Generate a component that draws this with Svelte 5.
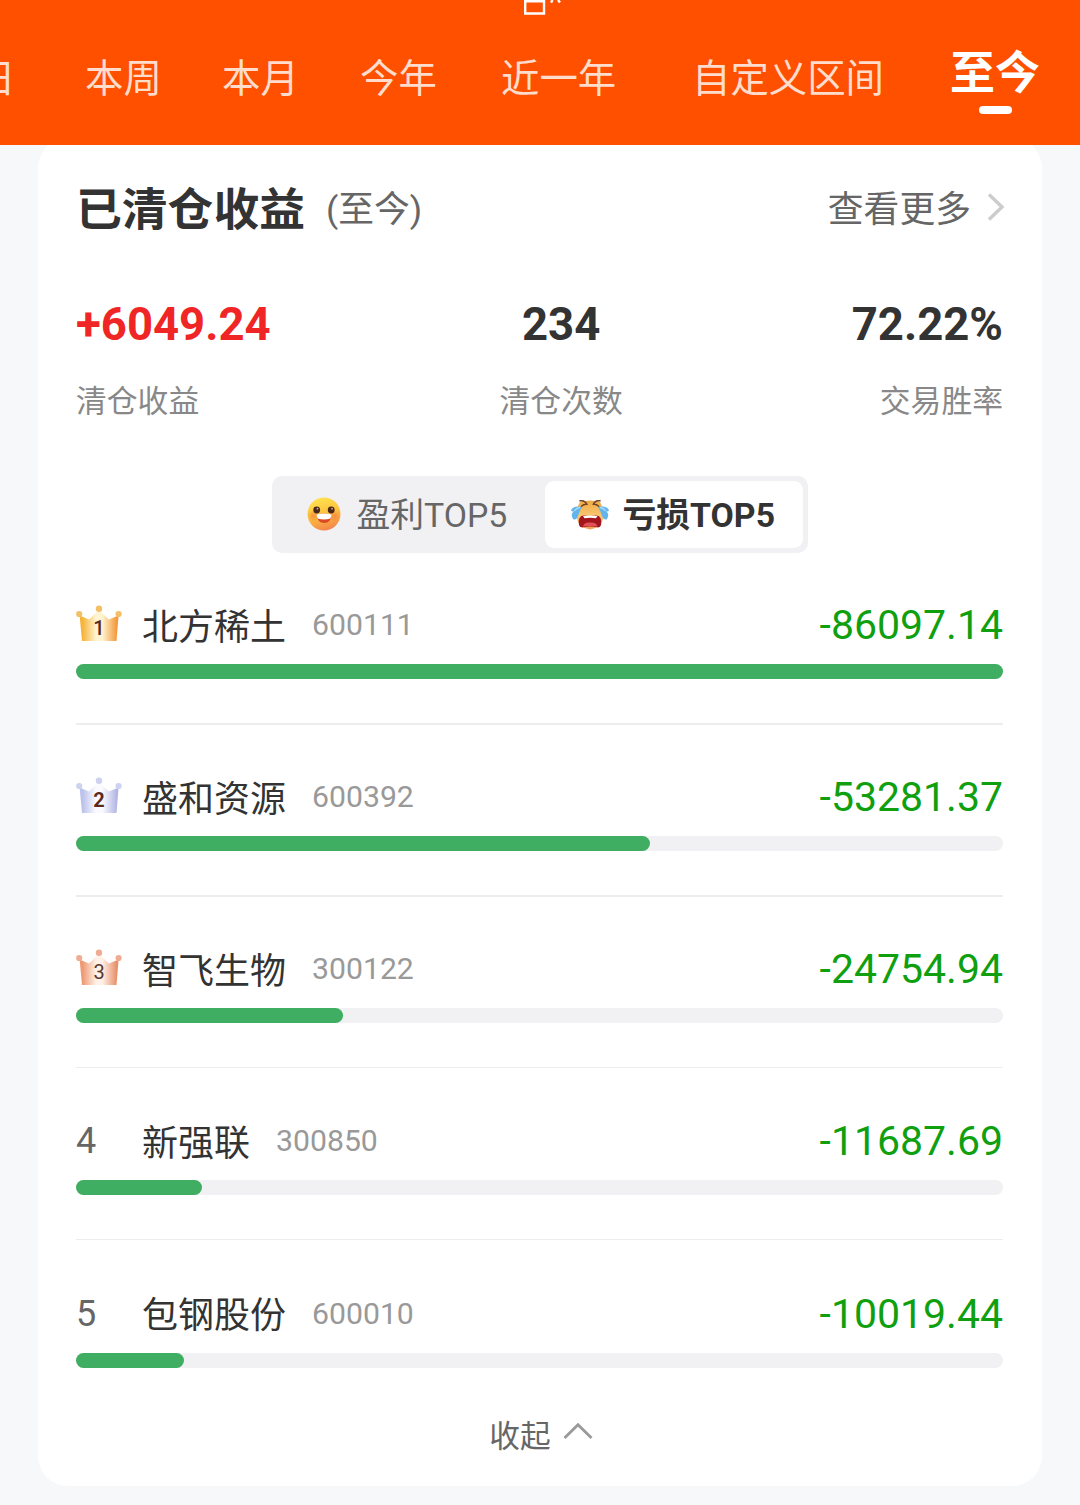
<script>
  const tabs = ['日', '本周', '本月', '今年', '近一年', '自定义区间', '至今'];
  let activeTab = $state('至今');
  let board = $state('loss');

  const stats = [
    { value: '+6049.24', label: '清仓收益', tone: 'up' },
    { value: '234', label: '清仓次数', tone: '' },
    { value: '72.22%', label: '交易胜率', tone: '' }
  ];

  const stocks = [
    { name: '北方稀土', code: '600111', amount: -86097.14 },
    { name: '盛和资源', code: '600392', amount: -53281.37 },
    { name: '智飞生物', code: '300122', amount: -24754.94 },
    { name: '新强联', code: '300850', amount: -11687.69 },
    { name: '包钢股份', code: '600010', amount: -10019.44 }
  ];

  const crowns = [
    { edge: '#f6b53a', mid: '#fff4d2', end: '#f39a3c', ball: '#f3c068', ink: '#5b2a1c', weight: 500 },
    { edge: '#bcc2ec', mid: '#fbfbff', end: '#b3b6e4', ball: '#ced1ef', ink: '#5b2a1c', weight: 700 },
    { edge: '#ee9a74', mid: '#fff1e8', end: '#e8906a', ball: '#efac92', ink: '#57372f', weight: 400 }
  ];

  const max = Math.max(...stocks.map((s) => Math.abs(s.amount)));
  const percent = (n) => (Math.abs(n) / max) * 100;
</script>

<div class="page">
  <header>
    <svg class="mark" viewBox="0 0 40 16" aria-hidden="true">
      <path d="M5.2 0V13.5H24V0M5.2 1.2H24" />
      <path d="M32.5 0l-1.5 2.6M38 0l2 2.6" />
    </svg>
    <nav>
      {#each tabs as tab}
        <button class="tab" class:active={tab === activeTab} onclick={() => (activeTab = tab)}>{tab}</button>
      {/each}
    </nav>
  </header>

  <main class="card">
    <div class="card-head">
      <h1>已清仓收益</h1>
      <span class="range">(至今)</span>
      <button class="more">
        查看更多
        <svg viewBox="0 0 18 30" aria-hidden="true"><path d="M2 2.5L15 15L2 27.5" /></svg>
      </button>
    </div>

    <div class="stats">
      {#each stats as stat}
        <div class="stat">
          <span class="value {stat.tone}">{stat.value}</span>
          <span class="label">{stat.label}</span>
        </div>
      {/each}
    </div>

    <div class="switch">
      <button class:selected={board === 'profit'} onclick={() => (board = 'profit')}>
        <svg class="smile" viewBox="0 0 34 34" aria-hidden="true">
          <defs>
            <linearGradient id="smile-face" x1="0.35" y1="0" x2="0.65" y2="1">
              <stop offset="0" stop-color="#ffe34f" />
              <stop offset="0.5" stop-color="#fcc03f" />
              <stop offset="1" stop-color="#f3824c" />
            </linearGradient>
            <radialGradient id="cheek">
              <stop offset="0" stop-color="#f7863c" stop-opacity="0.8" />
              <stop offset="1" stop-color="#f7863c" stop-opacity="0" />
            </radialGradient>
          </defs>
          <circle cx="17" cy="17" r="16.5" fill="url(#smile-face)" />
          <circle cx="6.5" cy="19" r="6" fill="url(#cheek)" />
          <circle cx="27.5" cy="19" r="6" fill="url(#cheek)" />
          <circle cx="9.7" cy="13" r="3.4" fill="#4b2717" />
          <circle cx="24.2" cy="13" r="3.4" fill="#4b2717" />
          <circle cx="10.5" cy="11.7" r="0.9" fill="#c9ad9c" />
          <circle cx="25" cy="11.7" r="0.9" fill="#c9ad9c" />
          <path d="M9.5 17.5Q17 15.7 24.7 17.5Q24 26 17.2 26Q10.3 26 9.5 17.5Z" fill="#d94a24" />
          <path d="M9.5 17.5Q17 15.7 24.7 17.5Q24.4 20.5 23 21.8Q17 23 11 21.8Q9.8 20.5 9.5 17.5Z" fill="#fff" />
        </svg>
        <span>盈利TOP5</span>
      </button>
      <button class:selected={board === 'loss'} onclick={() => (board = 'loss')}>
        <svg class="cry" viewBox="0 0 40 30" aria-hidden="true">
          <defs>
            <linearGradient id="cry-face" x1="0" y1="0" x2="0" y2="1">
              <stop offset="0" stop-color="#efa944" />
              <stop offset="0.55" stop-color="#fac873" />
              <stop offset="1" stop-color="#f3a055" />
            </linearGradient>
          </defs>
          <path d="M10 2Q20-1 30 2Q34 8 33 19Q31 28 20 29.5Q9 28 7 19Q6 8 10 2Z" fill="url(#cry-face)" />
          <path d="M9 25Q7.5 15.5 14 15.5Q17 15.5 20 16Q23 15.5 26 15.5Q32.5 15.5 31 25Q30.5 27.8 27 27.3Q20 25.8 13.5 27.3Q9.5 27.8 9 25Z" fill="#a4161d" />
          <path d="M13 15.9Q20 15.1 27.5 15.9L26 18.2Q20 17.4 14.5 18.2Z" fill="#fff" />
          <path d="M13 26.5Q14 22 20 22.5Q26.5 22 27.5 26.5Q20 25.3 13 26.5Z" fill="#e05258" />
          <path d="M10 .8Q15 .2 16.8 4.2Q13.5 4 11.5 6.2M30 .8Q25 .2 23.4 4.2Q26.7 4 28.7 6.2" fill="none" stroke="#704427" stroke-width="1.5" stroke-linecap="round" />
          <path d="M12 7Q3 5 1 10.5Q2 12 4 11.2Q0 14 3 19Q6 21 8 16Q9 12 12 7Z" fill="#62b4ec" />
          <path d="M28 7Q37 5 39 10.5Q38 12 36 11.2Q40 14 37 19Q34 21 32 16Q31 12 28 7Z" fill="#62b4ec" />
          <path d="M10 7.5Q6 8 4.5 11M30 7.5Q34 8 35.5 11" fill="none" stroke="#a9dbf8" stroke-width="1.3" />
        </svg>
        <span>亏损TOP5</span>
      </button>
    </div>

    <ul>
      {#each stocks as stock, i}
        <li>
          <div class="line">
            <span class="rank">
              {#if crowns[i]}
                <svg class="crown" viewBox="0 0 46 38" role="img" aria-label={`${i + 1}`}>
                  <defs>
                    <linearGradient id={`crown-${i}`}>
                      <stop offset="0.08" stop-color={crowns[i].edge} />
                      <stop offset="0.42" stop-color={crowns[i].mid} />
                      <stop offset="0.58" stop-color={crowns[i].mid} />
                      <stop offset="0.95" stop-color={crowns[i].end} />
                    </linearGradient>
                  </defs>
                  <path d="M3.6 11.5L13 15.5L23 6L32.8 15.5L42.6 11.5L40.5 37H6Z" fill={`url(#crown-${i})`} />
                  <circle cx="3.2" cy="10" r="3.1" fill={crowns[i].ball} />
                  <circle cx="23" cy="4.7" r="3.2" fill={crowns[i].ball} />
                  <circle cx="42.6" cy="10" r="3.1" fill={crowns[i].ball} />
                  <text x="23" y="31" text-anchor="middle" fill={crowns[i].ink} font-weight={crowns[i].weight}>{i + 1}</text>
                </svg>
              {:else}
                {i + 1}
              {/if}
            </span>
            <span class="name">{stock.name}</span>
            <span class="code">{stock.code}</span>
            <span class="amount">{stock.amount.toFixed(2)}</span>
          </div>
          <div class="track"><div class="fill" style="width: {percent(stock.amount)}%"></div></div>
          <div class="divider"></div>
        </li>
      {/each}
    </ul>

    <button class="collapse">
      收起
      <svg viewBox="0 0 30 18" aria-hidden="true"><path d="M1.5 16L15 2.8L28.5 16" /></svg>
    </button>
  </main>
</div>

<style>
  :global(body) {
    margin: 0;
    background: #f7f8fa;
  }

  .page {
    height: 1505px;
    overflow: hidden;
    background: #f7f8fa;
    font-family: Roboto, 'Noto Sans CJK SC', sans-serif;
    color: #333;
  }

  button {
    border: 0;
    padding: 0;
    background: none;
    font: inherit;
    color: inherit;
    white-space: nowrap;
  }

  svg {
    display: block;
    flex: none;
  }

  header {
    position: relative;
    z-index: 1;
    height: 145px;
    background: #ff5000;
  }

  .mark {
    width: 40px;
    height: 16px;
    margin-left: 520px;
    fill: none;
    stroke: #fff;
    stroke-width: 2.4;
    overflow: visible;
  }

  nav {
    display: grid;
    grid-template-columns: 108px 137px 138px 141px 191px 258px 92px;
    height: 126px;
    margin-left: -23px;
  }

  .tab {
    display: flex;
    flex-direction: column;
    align-items: flex-start;
    height: 126px;
    line-height: 125px;
    font-size: 38.4px;
    color: #ffdccc;
  }

  .tab.active {
    align-items: center;
    width: 90px;
    line-height: 116px;
    font-size: 45px;
    font-weight: 700;
    color: #fff;
  }

  .tab.active::after {
    content: '';
    width: 33px;
    height: 8px;
    margin-top: -26px;
    border-radius: 4px;
    background: #fff;
  }

  .card {
    display: flex;
    flex-direction: column;
    box-sizing: border-box;
    height: 1348px;
    margin: -7px 38px 0;
    padding: 0 39px 0 38px;
    border-radius: 30px;
    background: #fff;
  }

  .card-head {
    display: flex;
    align-items: center;
    height: 60px;
    margin-top: 40px;
  }

  h1 {
    margin: 0;
    padding-top: 5px;
    font-size: 45.8px;
    line-height: 60px;
    font-weight: 700;
  }

  .range {
    margin-left: 21px;
    padding-bottom: 5px;
    font-size: 35.8px;
    color: #666;
  }

  .more {
    display: flex;
    align-items: center;
    gap: 16px;
    margin-left: auto;
    padding-bottom: 4px;
    font-size: 35.8px;
    color: #666;
  }

  .more svg {
    width: 18px;
    height: 30px;
    margin-right: -2px;
    margin-top: 1px;
    fill: none;
    stroke: #ccc;
    stroke-width: 3.4;
  }

  .stats {
    display: flex;
    justify-content: space-between;
    margin-top: 57px;
  }

  .stat {
    display: flex;
    flex-direction: column;
    align-items: center;
  }

  .stat:first-child {
    align-items: flex-start;
  }

  .stat:last-child {
    align-items: flex-end;
  }

  .value {
    font-size: 45.5px;
    line-height: 60px;
    font-weight: 700;
  }

  .value.up {
    color: #f02626;
  }

  .label {
    margin-top: 27px;
    font-size: 30.8px;
    line-height: 40px;
    color: #888;
  }

  .switch {
    display: grid;
    grid-template-columns: 268px 258px;
    align-self: center;
    box-sizing: border-box;
    width: 536px;
    height: 77px;
    margin-top: 54px;
    padding: 5px;
    border-radius: 10px;
    background: #f1f1f4;
  }

  .switch button {
    display: flex;
    align-items: center;
    gap: 16px;
    padding-left: 30px;
    border-radius: 9px;
    font-size: 33.8px;
    color: #666;
  }

  .switch .selected {
    gap: 13px;
    padding-left: 25px;
    background: #fff;
    color: #333;
    font-weight: 700;
  }

  .switch span {
    padding-bottom: 4px;
  }

  .smile {
    width: 34px;
    height: 34px;
    margin-top: -2px;
  }

  .cry {
    width: 40px;
    height: 30px;
  }

  ul {
    margin: 0;
    padding: 0;
    list-style: none;
  }

  li {
    box-sizing: border-box;
    height: 172.15px;
    padding-top: 47px;
  }

  .line {
    display: flex;
    align-items: center;
    height: 50px;
    line-height: 50px;
  }

  .rank {
    width: 66px;
    font-size: 36px;
    color: #666;
  }

  .crown {
    width: 46px;
    height: 38px;
    margin-top: -4px;
    overflow: visible;
  }

  .crown text {
    font-size: 20px;
  }

  .name {
    padding-top: 5px;
    font-size: 36px;
  }

  .code {
    margin-left: 26px;
    font-size: 30.2px;
    color: #999;
  }

  .amount {
    margin-left: auto;
    font-size: 41px;
    color: #0f9f0f;
  }

  .track {
    height: 15px;
    margin-top: 14px;
    border-radius: 7.5px;
    background: #f1f1f3;
  }

  .fill {
    height: 15px;
    border-radius: 7.5px;
    background: #3fae62;
  }

  .divider {
    height: 1.5px;
    margin-top: 44px;
    background: #ededed;
  }

  li:nth-child(n + 3) .divider {
    height: 1px;
  }

  li:last-child .divider {
    display: none;
  }

  .collapse {
    display: flex;
    align-items: center;
    align-self: center;
    gap: 12px;
    height: 40px;
    padding-left: 3px;
    font-size: 30.7px;
    color: #666;
  }

  .collapse svg {
    width: 30px;
    height: 18px;
    margin-top: -5px;
    fill: none;
    stroke: #999;
    stroke-width: 2.8;
  }
</style>
